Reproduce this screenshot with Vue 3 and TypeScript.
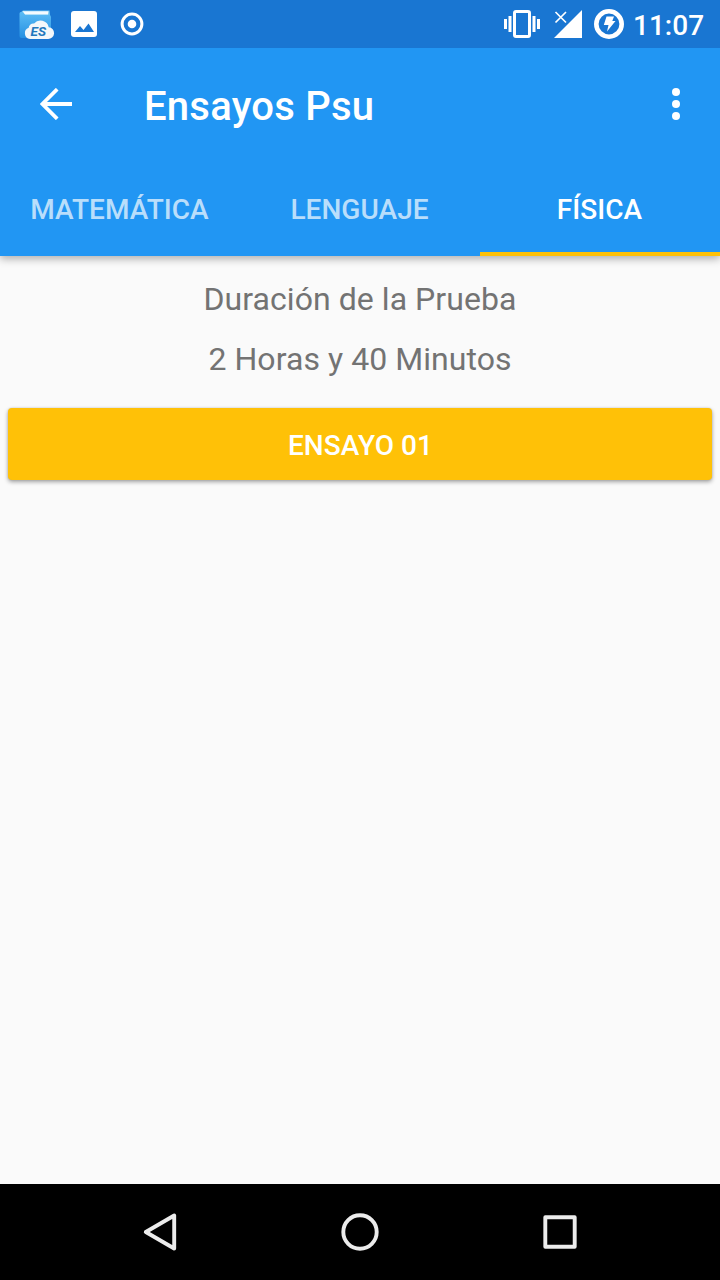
<script setup lang="ts">
import { ref } from 'vue'

interface Tab {
  id: string
  label: string
}

const tabs: Tab[] = [
  { id: 'mat', label: 'MATEMÁTICA' },
  { id: 'len', label: 'LENGUAJE' },
  { id: 'fis', label: 'FÍSICA' },
]
const active = ref('fis')
</script>

<template>
  <div class="screen">
    <div class="status">
      <div class="notifications">
        <svg class="slot" width="48" height="48" viewBox="0 0 48 48">
          <defs>
            <linearGradient id="folder" x1="0" y1="0" x2="0" y2="1">
              <stop offset="0" stop-color="#5bbcf5" />
              <stop offset="1" stop-color="#2590e2" />
            </linearGradient>
          </defs>
          <path d="M8 13l3-2.500h26.500L38 16H9z" fill="#6cc4f0" />
          <path d="M10.500 11.200h26l-.5 3.300H13z" fill="#f4fbff" />
          <path d="M7.500 13.500Q7.500 12 9 12l2 .5 2 2.500h24q2 0 2 2v19q0 2-2 2H9.500q-2 0-2-2z" fill="url(#folder)" />
          <path d="M18 39a5.800 5.800 0 0 1-1.300-11.200 4.500 4.500 0 0 1 5.400-4.200 8.300 8.300 0 0 1 14.600 3.600 5.900 5.900 0 0 1-1 11.800z" fill="#f3f7fa" />
          <text x="18.500" y="36.300" textLength="15.500" lengthAdjust="spacingAndGlyphs" class="logo-text">ES</text>
        </svg>
        <svg class="slot" width="48" height="48" viewBox="0 0 48 48">
          <rect x="11" y="11" width="26" height="26" rx="3" fill="#fff" />
          <path d="M15 32l5-6 3.500 4 5-6.500L34 32z" fill="#1976d2" />
        </svg>
        <svg class="slot" width="48" height="48" viewBox="0 0 48 48">
          <circle cx="24" cy="24" r="9.900" fill="none" stroke="#fff" stroke-width="3" />
          <circle cx="24" cy="24" r="4.300" fill="#fff" />
        </svg>
      </div>
      <svg width="36" height="48" viewBox="0 0 36 48">
        <rect x="10.500" y="11.500" width="15" height="25" rx="1.500" fill="none" stroke="#fff" stroke-width="3" />
        <path d="M1.500 19v10M6 16v16M30 16v16M34.500 19v10" stroke="#fff" stroke-width="3" />
      </svg>
      <svg class="signal" width="28" height="48" viewBox="0 0 28 48">
        <path d="M28 10v28H0z" fill="#fff" />
        <path d="M1.500 12l10.500 10.500M12 12L1.500 22.500" stroke="#fff" stroke-width="1.700" />
      </svg>
      <svg class="battery" width="30" height="48" viewBox="0 0 30 48">
        <circle cx="15" cy="24" r="12.700" fill="none" stroke="#fff" stroke-width="4.600" />
        <path d="M12.500 16.500h7.500l-1.700 4.500h3.200l-8.500 10.500 1.500-6.500H9.800z" fill="#fff" />
      </svg>
      <span class="clock">11:07</span>
    </div>

    <header class="appbar">
      <div class="toolbar">
        <svg class="back" width="32" height="32" viewBox="0 0 32 32">
          <path d="M32 16H3M17.200 1.200L2.400 16l14.800 14.800" fill="none" stroke="#fff" stroke-width="3.800" />
        </svg>
        <h1 class="title">Ensayos Psu</h1>
        <svg width="8" height="32" viewBox="0 0 8 32">
          <circle cx="4" cy="4" r="4" fill="#fff" />
          <circle cx="4" cy="16" r="4" fill="#fff" />
          <circle cx="4" cy="28" r="4" fill="#fff" />
        </svg>
      </div>
      <nav class="tabs">
        <button
          v-for="tab in tabs"
          :key="tab.id"
          class="tab"
          :class="{ active: tab.id === active }"
          @click="active = tab.id"
        >{{ tab.label }}</button>
      </nav>
    </header>

    <main class="content">
      <p class="info">Duración de la Prueba</p>
      <p class="info">2 Horas y 40 Minutos</p>
      <button class="exam">ENSAYO 01</button>
    </main>

    <footer class="navbar">
      <svg width="40" height="40" viewBox="0 0 40 40">
        <path d="M34.200 3.500v33L5.800 20z" class="nav-line" />
      </svg>
      <svg width="40" height="40" viewBox="0 0 40 40">
        <circle cx="20" cy="20" r="16.700" class="nav-line" />
      </svg>
      <svg width="40" height="40" viewBox="0 0 40 40">
        <rect x="5.300" y="5.300" width="29.400" height="29.400" class="nav-line" />
      </svg>
    </footer>
  </div>
</template>

<style>
body {
  margin: 0;
}
</style>

<style scoped>
.screen {
  width: 720px;
  height: 1280px;
  display: flex;
  flex-direction: column;
  background: #fafafa;
  font-family: Roboto, "Noto Sans", sans-serif;
  overflow: hidden;
}
svg {
  display: block;
  flex: none;
}
button {
  border: 0;
  font-family: inherit;
}
.status {
  position: relative;
  z-index: 1;
  height: 48px;
  flex: none;
  display: flex;
  align-items: center;
  background: #1976d2;
  padding: 0 16px 0 12px;
}
.notifications {
  display: flex;
  flex: 1;
}
.logo-text {
  font-size: 12.500px;
  font-weight: 700;
  font-style: italic;
  fill: #2378bd;
}
.signal {
  margin-left: 14px;
}
.battery {
  margin-left: 12px;
}
.clock {
  width: 71px;
  margin-left: 9px;
  padding-top: 4px;
  font-size: 28px;
  line-height: 32px;
  font-weight: 500;
  color: #fff;
  white-space: nowrap;
}
.appbar {
  height: 208px;
  flex: none;
  background: #2196f3;
  box-shadow: 0 3px 8px rgba(0, 0, 0, 0.3);
}
.toolbar {
  height: 112px;
  display: flex;
  align-items: center;
  padding: 0 40px;
}
.title {
  flex: 1;
  margin: 0 0 0 72px;
  padding-top: 5px;
  font-size: 40px;
  line-height: 47px;
  letter-spacing: 0.24px;
  font-weight: 500;
  color: #fff;
}
.tabs {
  height: 96px;
  display: grid;
  grid-template-columns: repeat(3, 1fr);
}
.tab {
  padding: 8px 1px 0 0;
  background: none;
  border-bottom: 4px solid transparent;
  font-size: 28px;
  line-height: 34px;
  letter-spacing: 0.05px;
  font-weight: 500;
  color: rgba(255, 255, 255, 0.7);
}
.tab.active {
  color: #fff;
  border-bottom-color: #ffc107;
}
.content {
  flex: 1;
  padding: 24px 8px 0;
}
.info {
  margin: 0 0 22px;
  font-size: 32px;
  line-height: 38px;
  letter-spacing: 0.06px;
  text-align: center;
  color: #737373;
}
.exam {
  display: block;
  width: 100%;
  height: 72px;
  margin-top: 30px;
  padding: 2px 0 0 1px;
  border-radius: 4px;
  background: #ffc107;
  color: #fff;
  font-size: 28px;
  letter-spacing: 0.08px;
  font-weight: 500;
  box-shadow: 0 2px 4px rgba(0, 0, 0, 0.35), 0 0 2px rgba(0, 0, 0, 0.15);
}
.navbar {
  height: 96px;
  display: flex;
  align-items: center;
  justify-content: center;
  gap: 160px;
  background: #000;
}
.nav-line {
  fill: none;
  stroke: #ececec;
  stroke-width: 3.900;
  stroke-linejoin: round;
}
</style>
